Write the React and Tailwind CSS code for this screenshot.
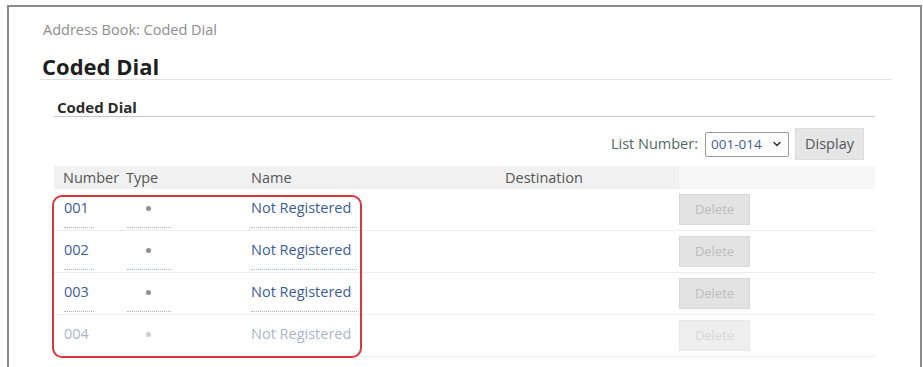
import { ChevronDown } from 'lucide-react'

const FONT = '[font-family:"Open_Sans","Noto_Sans",sans-serif]'

const ROWS = [
  { num: '001', faded: false },
  { num: '002', faded: false },
  { num: '003', faded: false },
  { num: '004', faded: true },
]

// column template shared by header and body rows
const COLS = 'grid grid-cols-[66px_125px_254px_180px_1fr]'

function Dots({ w, show }) {
  if (!show) return <div className="h-[3px]" />
  return <div className="h-0 border-b border-dotted border-[#a9b3c6] mb-[2px]" style={{ width: w }} />
}

function Row({ num, faded }) {
  const tone = faded ? 'opacity-45' : ''
  return (
    <div className={`${COLS} h-[42px] border-b border-[#ececec]`}>
      <div className={`flex flex-col pl-[10px] ${tone}`}>
        <div className="flex-1 flex items-center text-[#3d5c99]">{num}</div>
        <Dots w={30} show={!faded} />
      </div>
      <div className={`flex flex-col pl-[7px] ${tone}`}>
        <div className="flex-1 flex items-center">
          <span className="ml-[19px] w-[5px] h-[5px] rounded-full bg-[#8f8f8f]" />
        </div>
        <Dots w={44} show={!faded} />
      </div>
      <div className={`flex flex-col pl-[6px] ${tone}`}>
        <div className="flex-1 flex items-center text-[#3d5c99]">Not Registered</div>
        <Dots w={106} show={!faded} />
      </div>
      <div />
      <div className="flex items-center">
        <button
          className={`w-[71px] h-[31px] bg-[#e3e3e3] border border-[#d8d8d8] text-[#bdbdbd] text-[13px] ${faded ? 'opacity-60' : ''}`}
        >
          Delete
        </button>
      </div>
    </div>
  )
}

export default function App() {
  return (
    <div className={`w-[923px] h-[367px] bg-white overflow-hidden pt-[5px] pl-[7px] pr-[1px] ${FONT}`}>
      <div className="h-[380px] border-t-2 border-x-2 border-[#8b8b8b] pl-[31px] pr-[28px]">
        <div className="pt-[15px] text-[14.5px] leading-[16px] text-[#8c8c8c] pl-[3px]">
          Address Book: Coded Dial
        </div>

        <h1 className="mt-[16px] pl-[2px] text-[22px] leading-[24px] font-bold text-[#1f1f1f] border-b border-[#e2e2e2] pb-[1px]">
          Coded Dial
        </h1>

        <div className="ml-[14px] mr-[17px]">
          <h2 className="mt-[19px] pl-[3px] text-[15px] leading-[16px] font-bold text-[#2a2a2a] border-b border-[#c9c9c9] pb-[1px]">
            Coded Dial
          </h2>

          <div className="mt-[11px] flex items-center justify-end gap-[6px] pr-[11px] text-[14.5px]">
            <span className="text-[#4d6b62] mr-[1px]">List Number:</span>
            <div className="w-[84px] h-[25px] border border-[#9a9a9a] rounded-[2px] flex items-center justify-between px-[5px] text-[13.5px] text-[#3d5c99]">
              <span>001-014</span>
              <ChevronDown size={12} strokeWidth={3} className="text-[#333]" />
            </div>
            <button className="w-[69px] h-[32px] bg-[#e6e6e6] border border-[#dcdcdc] text-[#555] text-[14.5px]">
              Display
            </button>
          </div>

          <div className="relative mt-[6px] text-[14.5px]">
            <div className={`${COLS} h-[23px] items-center bg-[#f1f1f1] text-[#555]`}>
              <div className="pl-[9px]">Number</div>
              <div className="pl-[6px]">Type</div>
              <div className="pl-[6px]">Name</div>
              <div className="pl-[6px]">Destination</div>
              <div className="h-full bg-[#f6f6f6]" />
            </div>

            {ROWS.map((r) => (
              <Row key={r.num} {...r} />
            ))}

            {/* highlight ring over the first column group */}
            <div className="absolute left-[-2px] top-[29px] w-[310px] h-[163px] border-2 border-[#d9353d] rounded-[10px] pointer-events-none" />
          </div>
        </div>
      </div>
    </div>
  )
}
